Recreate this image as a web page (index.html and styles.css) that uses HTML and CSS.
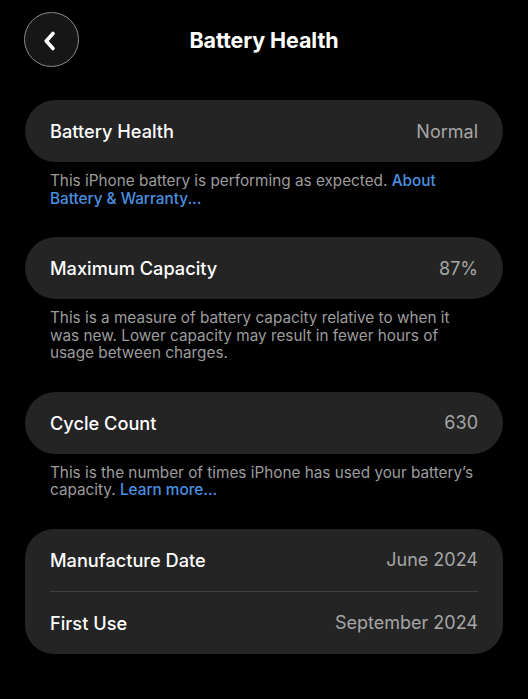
FILE: index.html
```html
<!DOCTYPE html>
<html lang="en">
<head>
<meta charset="utf-8">
<title>Battery Health</title>
<link rel="stylesheet" href="styles.css">
</head>
<body>
<header class="topbar">
  <div class="topbar-left">
    <button class="back-btn" aria-label="Back">
      <svg class="chevron" width="16" height="22" viewBox="0 0 16 22" aria-hidden="true">
        <path d="M11 3.5 L4.2 11 L11 18.5" fill="none" stroke="#ffffff" stroke-width="3.6" stroke-linecap="round" stroke-linejoin="round"/>
      </svg>
    </button>
  </div>
  <h1 class="title">Battery Health</h1>
  <div class="topbar-right"></div>
</header>

<main class="content">
  <section class="group">
    <div class="card">
      <div class="row"><span class="label">Battery Health</span><span class="value">Normal</span></div>
    </div>
    <p class="note">This iPhone battery is performing as expected. <a class="link" href="#">About Battery &amp; Warranty...</a></p>
  </section>

  <section class="group">
    <div class="card">
      <div class="row"><span class="label">Maximum Capacity</span><span class="value">87%</span></div>
    </div>
    <p class="note">This is a measure of battery capacity relative to when it was new. Lower capacity may result in fewer hours of usage between charges.</p>
  </section>

  <section class="group">
    <div class="card">
      <div class="row"><span class="label">Cycle Count</span><span class="value">630</span></div>
    </div>
    <p class="note">This is the number of times iPhone has used your battery’s capacity. <a class="link" href="#">Learn more...</a></p>
  </section>

  <section class="group">
    <div class="card card-multi">
      <div class="row"><span class="label">Manufacture Date</span><span class="value">June 2024</span></div>
      <div class="row row-divided"><span class="label">First Use</span><span class="value">September 2024</span></div>
    </div>
  </section>
</main>
</body>
</html>
```

FILE: styles.css
```css
* { box-sizing: border-box; }

html, body {
  margin: 0;
  padding: 0;
  background: #000000;
}

body {
  font-family: "Inter", "Liberation Sans", sans-serif;
  color: #ffffff;
  -webkit-font-smoothing: antialiased;
}

.topbar {
  display: grid;
  grid-template-columns: 1fr auto 1fr;
  align-items: center;
  padding: 12px 24px 0 24px;
}

.topbar-left {
  display: flex;
  align-items: center;
}

.back-btn {
  width: 55px;
  height: 55px;
  border-radius: 50%;
  border: 1px solid #8a8a8a;
  background: #161616;
  display: flex;
  align-items: center;
  justify-content: center;
  padding: 0;
  margin: 0;
}

.chevron {
  display: block;
  margin-right: 3px;
  margin-top: 2px;
}

.title {
  margin: 0;
  font-size: 21.5px;
  font-weight: 700;
  color: #ffffff;
  letter-spacing: -0.1px;
}

.content {
  padding: 33px 25px 0 25px;
}

.group {
  margin: 0;
}

.card {
  background: #242424;
  border-radius: 31px;
  padding: 0 25px;
}

.card-multi {
  border-radius: 29px;
}

.row {
  display: flex;
  justify-content: space-between;
  align-items: center;
  height: 62px;
}

.row-divided {
  border-top: 1px solid #3e3e3e;
  height: 63px;
}

.label {
  font-size: 18.2px;
  font-weight: 500;
  color: #ffffff;
}

.value {
  font-size: 18px;
  font-weight: 400;
  color: #a6a6a6;
}

.note {
  margin: 0;
  padding: 10px 25px 30px 25px;
  font-size: 15.3px;
  line-height: 17.5px;
  color: #9c9c9c;
}

.link {
  color: #4a90e0;
  text-decoration: none;
  font-weight: 500;
}
```
